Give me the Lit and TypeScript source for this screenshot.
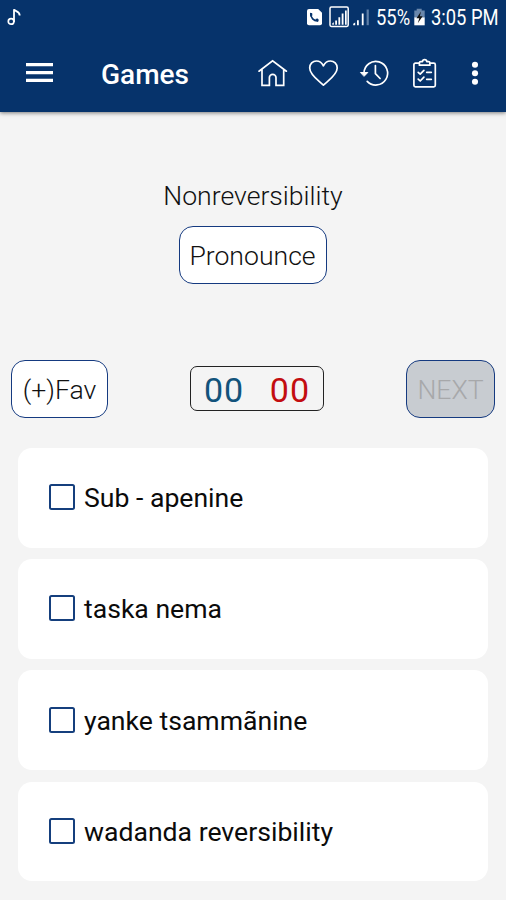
import { LitElement, html, css } from "lit";
import { customElement, property, state } from "lit/decorators.js";

@customElement("status-bar")
class StatusBar extends LitElement {
  static styles = css`
    :host { display: flex; height: 36px; justify-content: space-between; color: #fff; }
    svg { display: block; flex: none; }
    .right { display: flex; }
    .label { line-height: 36px; font-size: 21.5px; white-space: pre; flex: none; }
    .pct { width: 37px; }
    .time { width: 75px; }
    .squeeze { display: inline-block; transform: scaleX(0.855); transform-origin: 0 50%; }
  `;
  render() {
    return html`
      <svg width="30" height="36" viewBox="0 0 30 36" fill="none" stroke="#fff">
        <circle cx="11.1" cy="21.4" r="2.8" stroke-width="1.7" />
        <path d="M14 22V9.3c.6 2.2 5.8 1.8 5.7 6.2" stroke-width="1.8" />
      </svg>
      <div class="right">
        <svg width="70" height="36" viewBox="306 0 70 36">
          <path d="M309 9h9.2l3.8 3.8v10.5a2 2 0 0 1-2 2h-11a2 2 0 0 1-2-2V11a2 2 0 0 1 2-2z" fill="#fff" />
          <path d="M310.8 13.2c-.7 4.3 3.2 8.3 7.4 7.7" fill="none" stroke="#06336b" stroke-width="1.7" />
          <path d="M310 12.8l2.2.4.2 2.4-1.9.8zM315.2 18.9l2.4-.4 1.3 1.4-1.3 1.8z" fill="#06336b" />
          <rect x="330" y="7.1" width="18.2" height="19.4" rx="1.4" fill="none" stroke="#fff" stroke-width="1.5" />
          <path d="M332.3 24.8v-1.5l1.5-1v2.5zM335.2 24.8v-4.2h1.8v4.2zM338.4 24.8v-7.5h1.8v7.5zM341.7 24.8V13.4h1.8v11.4zM345 24.8V10.5h1.7v14.3z" fill="#fff" />
          <path d="M353.2 25.2v-1.4l2-1.2v2.6zM357 25.2v-5h1.8v5zM361.8 25.2V13.5h1.8v11.7z" fill="#fff" />
          <path d="M366.6 25.2V9.5h2.2v15.7z" fill="#5e7fa8" />
        </svg>
        <div class="label pct"><span class="squeeze">55%</span></div>
        <svg width="18" height="36" viewBox="413 0 18 36">
          <path d="M416.7 8.8h5v1.8h3V18h-10.4v-7.4h2.4z" fill="#6a87ab" />
          <path d="M414.3 17.5h10.4v7.8h-10.4z" fill="#fff" />
          <path d="M421 11.5l-4.5 6.8h2.8l-1.5 5 4.8-7h-2.8z" fill="#111" />
        </svg>
        <div class="label time"><span class="squeeze">3:05 PM</span></div>
      </div>
    `;
  }
}

@customElement("tool-bar")
class ToolBar extends LitElement {
  @property() heading = "";
  static styles = css`
    :host { display: flex; height: 76px; align-items: center; color: #fff; }
    svg { display: block; flex: none; fill: none; stroke: #fff; stroke-width: 1.7; stroke-linejoin: round; stroke-linecap: round; }
    .menu { stroke: none; fill: #fff; }
    .heading { flex: 1; font-size: 28px; font-weight: 500; line-height: 40px; margin: 2px 0 0; white-space: nowrap; }
    .actions { display: flex; padding-right: 5px; }
    .dots { fill: #fff; stroke: none; }
  `;
  render() {
    return html`
      <svg class="menu" width="101" height="40" viewBox="0 54 101 40">
        <path d="M26 63h27v3.2H26zM26 71h27v3.2H26zM26 78.8h27V82H26z" />
      </svg>
      <h1 class="heading">${this.heading}</h1>
      <div class="actions">
        <svg width="51" height="40" viewBox="247 54 51 40">
          <path d="M259 71.2l13.6-10.4 13.8 10.4M262 69.4v16h7.4v-7.8a3.3 3.3 0 0 1 6.6 0v7.8h7.7v-16" stroke-linejoin="miter" />
        </svg>
        <svg width="51" height="40" viewBox="298 54 51 40">
          <path d="M323.4 85.2C319 80.8 309.7 75 309.7 68c0-4.2 3-7 6.7-7 3.2 0 5.6 2 7 4.8 1.4-2.8 3.8-4.8 7-4.8 3.7 0 6.8 2.8 6.8 7 0 7-9.4 12.8-13.8 17.2z" />
        </svg>
        <svg width="51" height="40" viewBox="349 54 51 40">
          <path d="M364 73a11.8 11.8 0 1 1 3.2 8.3M375.4 65.5v8.2l4.7 4.8" />
          <path d="M360.8 72.5h7l-3.5 3.6z" fill="#fff" stroke-width="1" />
        </svg>
        <svg width="51" height="40" viewBox="400 54 51 40">
          <path d="M419.2 63.2h-3.8a1.5 1.5 0 0 0-1.5 1.5v20.6a1.5 1.5 0 0 0 1.5 1.5h18.4a1.5 1.5 0 0 0 1.5-1.5V64.7a1.5 1.5 0 0 0-1.5-1.5H430" />
          <path d="M419.4 65.2v-2.4c0-.8.6-1.2 1.4-1.2h1.7c.2-2.7 4.1-2.7 4.3 0h1.7c.8 0 1.4.4 1.4 1.2v2.4z" />
          <path d="M418.2 72.3l2 1.9 3.7-3.9M418.2 79.1l2 1.9 3.7-3.9M426.7 72.3h4.6M426.7 79.3h4.6" />
        </svg>
        <svg class="dots" width="50" height="40" viewBox="451 54 50 40">
          <circle cx="475" cy="64.8" r="3.05" /><circle cx="475" cy="73.2" r="3.05" /><circle cx="475" cy="81.7" r="3.05" />
        </svg>
      </div>
    `;
  }
}

@customElement("answer-option")
class AnswerOption extends LitElement {
  @property() label = "";
  static styles = css`
    :host { display: flex; align-items: center; height: 99.6px; box-sizing: border-box; padding-left: 31px; gap: 10px; background: #fff; border-radius: 14px; }
    .box { box-sizing: border-box; width: 26px; height: 26px; border: 2px solid #153f7d; border-radius: 2.5px; flex: none; margin: 0 -1px 1px 0; }
    .text { font-size: 26.6px; line-height: 34px; white-space: nowrap; color: #0b0b0b; margin-top: 1px; }
  `;
  render() {
    return html`<span class="box"></span><span class="text">${this.label}</span>`;
  }
}

@customElement("app-root")
class AppRoot extends LitElement {
  @state() private answers = ["Sub - apenine", "taska nema", "yanke tsammãnine", "wadanda reversibility"];
  static styles = css`
    :host { display: block; height: 900px; overflow: hidden; background: #f4f4f4; font-family: Roboto, sans-serif; color: #111; }
    .header { height: 112px; background: #06336b; box-shadow: 0 1px 4px rgba(0, 0, 0, 0.5); }
    .question { display: flex; flex-direction: column; align-items: center; padding-top: 66px; }
    .word { font-size: 26.6px; font-weight: 300; line-height: 36px; margin: 0; white-space: nowrap; }
    .btn { box-sizing: border-box; height: 58px; padding: 1px 0 0; border: 1.5px solid #153a80; border-radius: 14px; background: #fff; color: #111; font: 300 26.6px/36px Roboto, sans-serif; white-space: nowrap; }
    .pronounce { width: 148px; margin: 12px 1px 0 0; }
    .controls { display: flex; justify-content: space-between; align-items: center; margin-top: 76px; padding: 0 11px; }
    .fav { width: 97px; }
    .next { width: 89px; background: #c8ccd1; color: #a7a8aa; }
    .score { box-sizing: border-box; display: flex; justify-content: space-between; align-items: center; width: 134px; height: 45px; margin-bottom: 1px; padding: 3px 13px 0 13px; border: 1.5px solid #222; border-radius: 7px; font-size: 34px; line-height: 40px; letter-spacing: 1px; }
    .right { color: #12537b; }
    .wrong { color: #c30d10; }
    .answers { display: flex; flex-direction: column; gap: 11.6px; margin: 30px 18px 0; }
  `;
  render() {
    return html`
      <header class="header">
        <status-bar></status-bar>
        <tool-bar heading="Games"></tool-bar>
      </header>
      <section class="question">
        <p class="word">Nonreversibility</p>
        <button class="btn pronounce">Pronounce</button>
      </section>
      <section class="controls">
        <button class="btn fav">(+)Fav</button>
        <div class="score"><span class="right">00</span><span class="wrong">00</span></div>
        <button class="btn next" disabled>NEXT</button>
      </section>
      <section class="answers">
        ${this.answers.map((a) => html`<answer-option .label=${a}></answer-option>`)}
      </section>
    `;
  }
}
